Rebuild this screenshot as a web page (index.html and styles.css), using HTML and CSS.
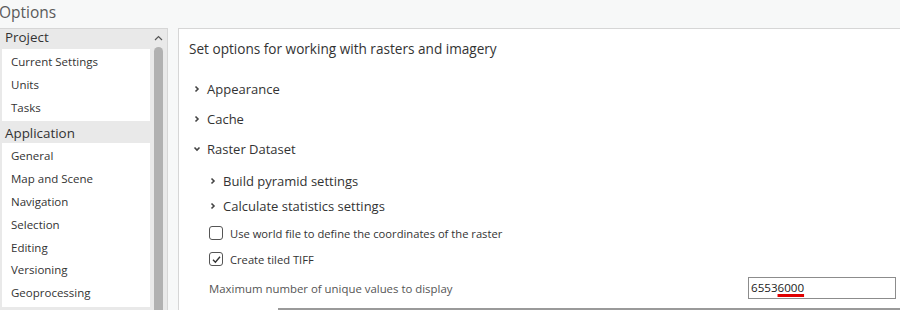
FILE: index.html
```html
<!DOCTYPE html>
<html>
<head>
    <title>Options</title>
    <link rel="stylesheet" href="styles.css">
</head>
<body>
    <div class="title">Options</div>
    <div class="main">
        <div class="nav">
            <div class="nav-list">
                <div class="nav-group first">Project</div>
                <div class="nav-items">
                    <div class="nav-item">Current Settings</div>
                    <div class="nav-item">Units</div>
                    <div class="nav-item">Tasks</div>
                </div>
                <div class="nav-group">Application</div>
                <div class="nav-items">
                    <div class="nav-item">General</div>
                    <div class="nav-item">Map and Scene</div>
                    <div class="nav-item">Navigation</div>
                    <div class="nav-item">Selection</div>
                    <div class="nav-item">Editing</div>
                    <div class="nav-item">Versioning</div>
                    <div class="nav-item">Geoprocessing</div>
                </div>
            </div>
            <div class="scrollbar">
                <svg class="scroll-up" width="9" height="6" viewBox="0 0 9 6">
                    <path d="M1 5 L4.5 1.5 L8 5" fill="none" stroke="#555" stroke-width="1.2"/>
                </svg>
                <div class="thumb"></div>
            </div>
        </div>

        <div class="content">
            <div class="heading">Set options for working with rasters and imagery</div>

            <div class="section">
                <svg class="chev" width="8" height="8" viewBox="0 0 8 8"><path d="M2.5 1.5 L5 4 L2.5 6.5" fill="none" stroke="#444" stroke-width="1.6"/></svg>
                Appearance
            </div>
            <div class="section">
                <svg class="chev" width="8" height="8" viewBox="0 0 8 8"><path d="M2.5 1.5 L5 4 L2.5 6.5" fill="none" stroke="#444" stroke-width="1.6"/></svg>
                Cache
            </div>
            <div class="section">
                <svg class="chev" width="8" height="8" viewBox="0 0 8 8"><path d="M1.5 2.5 L4 5 L6.5 2.5" fill="none" stroke="#444" stroke-width="1.6"/></svg>
                Raster Dataset
            </div>

            <div class="sub">
                <div class="sub-section">
                    <svg class="chev" width="8" height="8" viewBox="0 0 8 8"><path d="M2.5 1.5 L5 4 L2.5 6.5" fill="none" stroke="#444" stroke-width="1.6"/></svg>
                    Build pyramid settings
                </div>
                <div class="sub-section">
                    <svg class="chev" width="8" height="8" viewBox="0 0 8 8"><path d="M2.5 1.5 L5 4 L2.5 6.5" fill="none" stroke="#444" stroke-width="1.6"/></svg>
                    Calculate statistics settings
                </div>
                <label class="check-row spaced">
                    <span class="box"></span>
                    Use world file to define the coordinates of the raster
                </label>
                <label class="check-row">
                    <span class="box">
                        <svg width="11" height="11" viewBox="0 0 11 11"><path d="M2 5.8 L4.4 8.2 L9 2.8" fill="none" stroke="#333" stroke-width="1.4"/></svg>
                    </span>
                    Create tiled TIFF
                </label>
                <div class="value-row">
                    <span class="value-label">Maximum number of unique values to display</span>
                    <div class="value-input">6553<span class="misspelled">6000</span></div>
                </div>
            </div>
            <div class="divider"></div>
        </div>
    </div>
</body>
</html>
```

FILE: styles.css
```css
body {
    margin: 0;
    background-color: #f7f8f8;
    font-family: "Open Sans", "Noto Sans", sans-serif;
    color: #333;
    width: 900px;
    height: 310px;
    overflow: hidden;
}
.title {
    height: 28px;
    font-size: 15.5px;
    line-height: 25px;
    color: #5a5a5a;
    margin-left: -1px;
}
.main {
    display: flex;
    gap: 10px;
    height: 282px;
}
.nav {
    display: flex;
    width: 167px;
    border-top: 1px solid #d6d6d6;
    border-right: 1px solid #d6d6d6;
    background-color: #e9e9e9;
}
.nav-list {
    width: 150px;
}
.nav-group {
    box-sizing: border-box;
    height: 22px;
    padding-top: 3px;
    line-height: 19px;
    padding-left: 5px;
    font-size: 13.4px;
    color: #333;
    background-color: #e9e9e9;
}
.nav-group.first {
    height: 20px;
    padding-top: 0;
    line-height: 17px;
}
.nav-items {
    background-color: #fff;
    padding-bottom: 4px;
    margin-left: 2px;
}
.nav-item {
    height: 22.8px;
    line-height: 25px;
    padding-left: 9px;
    font-size: 11.5px;
    color: #333;
}
.scrollbar {
    width: 17px;
    position: relative;
    background-color: #e9e9e9;
}
.scroll-up {
    position: absolute;
    left: 4px;
    top: 6px;
}
.thumb {
    position: absolute;
    left: 4px;
    top: 18px;
    width: 9px;
    bottom: 0;
    background-color: #b1b1b1;
    border-radius: 5px 5px 0 0;
}
.content {
    flex: 1;
    background-color: #fff;
    border-top: 1px solid #d6d6d6;
    border-left: 1px solid #d6d6d6;
    padding-left: 10px;
}
.heading {
    font-size: 13.6px;
    margin-top: 9px;
    height: 22px;
    line-height: 22px;
    margin-bottom: 14px;
}
.section {
    display: flex;
    align-items: center;
    height: 30px;
    font-size: 13px;
    padding-left: 4px;
}
.chev {
    margin-right: 6px;
}
.sub {
    padding-left: 20px;
    padding-top: 4px;
}
.sub-section {
    display: flex;
    align-items: center;
    height: 25px;
    font-size: 13px;
}
.check-row {
    display: flex;
    align-items: center;
    height: 26px;
    font-size: 11.2px;
}
.check-row.spaced {
    margin-top: 2px;
}
.box {
    width: 12px;
    height: 12px;
    border: 1px solid #555;
    border-radius: 3px;
    margin-right: 7px;
    display: flex;
    align-items: center;
    justify-content: center;
}
.value-row {
    display: flex;
    align-items: center;
    justify-content: space-between;
    height: 32px;
    padding-right: 4px;
}
.value-label {
    font-size: 11.4px;
    color: #555;
}
.value-input {
    width: 144px;
    height: 20px;
    border: 1px solid #8c8c8c;
    font-size: 11.6px;
    line-height: 20px;
    padding-left: 2px;
    color: #222;
}
.misspelled {
    text-decoration: underline solid #e00000;
    text-decoration-thickness: 3px;
    text-underline-offset: 2px;
}
.divider {
    margin-left: 89px;
    border-top: 2px solid #9a9a9a;
    margin-top: 4px;
}
```
